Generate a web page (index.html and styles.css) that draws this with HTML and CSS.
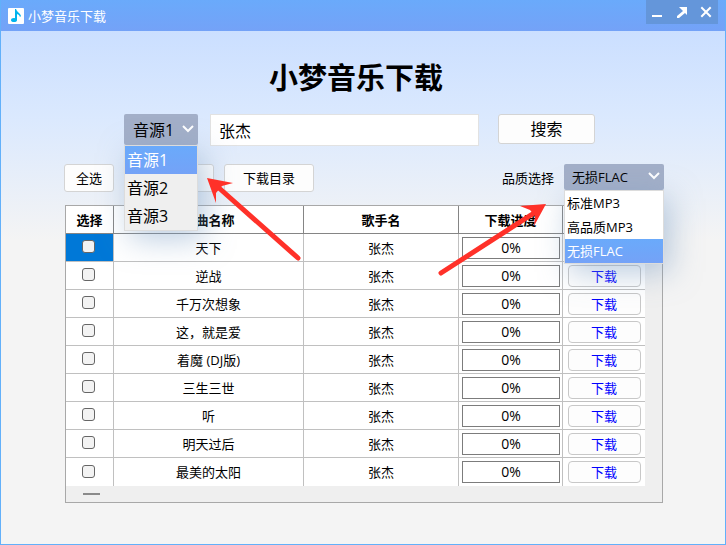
FILE: index.html
```
<!DOCTYPE html>
<html lang="zh-CN">
<head>
    <meta charset="UTF-8">
    <meta name="viewport" content="width=device-width, initial-scale=1.0">
    <title>小梦音乐下载</title>
    <link rel="stylesheet" href="styles.css">
</head>
<body>
    <div class="window">

        <!-- Title bar -->
        <header class="titlebar">
            <svg class="logo" viewBox="0 0 16 16" width="16" height="16" aria-hidden="true">
                <rect width="16" height="16" rx="1" fill="#fff"/>
                <ellipse cx="6" cy="12" rx="3" ry="2" fill="#00b4ee"/>
                <path d="M7 1h1l1 2 3 3 1 2-1 1-1-2-2-1v6H7z" fill="#00b4ee"/>
            </svg>
            <span class="titlebar-text">小梦音乐下载</span>
            <div class="window-buttons">
                <button class="window-button" aria-label="最小化">
                    <svg viewBox="0 0 12 12" width="12" height="12"><path d="M0 9h10v2H0z" fill="#fff"/></svg>
                </button>
                <button class="window-button" aria-label="最大化">
                    <svg viewBox="0 0 12 12" width="12" height="12"><path d="M3 1h8v8L9 7l-6 5H1v-2l6-5z" fill="#fff"/></svg>
                </button>
                <button class="window-button" aria-label="关闭">
                    <svg viewBox="0 0 12 12" width="12" height="12"><path d="M2 2l8 8M10 2l-8 8" stroke="#fff" stroke-width="2" stroke-linecap="square"/></svg>
                </button>
            </div>
        </header>

        <main class="content">
            <h1>小梦音乐下载</h1>

            <!-- Source and keyword -->
            <form class="search-row">
                <div class="dropdown dropdown-source">
                    <select class="select" id="source" aria-label="音源">
                        <option>音源1</option>
                        <option>音源2</option>
                        <option>音源3</option>
                    </select>
                    <svg class="chevron" viewBox="0 0 12 8" width="12" height="8"><path d="M1 1l5 5 5-5" fill="none" stroke="#fff" stroke-width="2"/></svg>
                    <ul class="menu">
                        <li class="active">音源1</li>
                        <li>音源2</li>
                        <li>音源3</li>
                    </ul>
                </div>
                <input class="keyword" type="text" value="张杰" aria-label="关键词">
                <button class="button button-search" type="button">搜索</button>
            </form>

            <!-- Toolbar -->
            <div class="toolbar">
                <button class="button button-small">全选</button>
                <button class="button" aria-label="下载"></button>
                <button class="button">下载目录</button>
                <label class="quality-label" for="quality">品质选择</label>
                <div class="dropdown dropdown-quality">
                    <select class="select" id="quality">
                        <option>标准MP3</option>
                        <option>高品质MP3</option>
                        <option selected>无损FLAC</option>
                    </select>
                    <svg class="chevron" viewBox="0 0 12 8" width="12" height="8"><path d="M1 1l5 5 5-5" fill="none" stroke="#fff" stroke-width="2"/></svg>
                    <ul class="menu">
                        <li>标准MP3</li>
                        <li>高品质MP3</li>
                        <li class="active">无损FLAC</li>
                    </ul>
                </div>
            </div>

            <!-- Song list -->
            <div class="panel">
                <table class="songs">
                    <colgroup>
                        <col class="col-check">
                        <col class="col-name">
                        <col class="col-singer">
                        <col class="col-progress">
                        <col class="col-action">
                    </colgroup>
                    <thead>
                        <tr><th>选择</th><th>歌曲名称</th><th>歌手名</th><th>下载进度</th><th></th></tr>
                    </thead>
                    <tbody>
                        <tr>
                            <td class="selected"><input type="checkbox" aria-label="天下"></td><td>天下</td><td>张杰</td>
                            <td><div class="progress">0%</div></td><td><button class="download" aria-label="下载"></button></td>
                        </tr>
                        <tr>
                            <td><input type="checkbox" aria-label="逆战"></td><td>逆战</td><td>张杰</td>
                            <td><div class="progress">0%</div></td><td><button class="download">下载</button></td>
                        </tr>
                        <tr>
                            <td><input type="checkbox" aria-label="千万次想象"></td><td>千万次想象</td><td>张杰</td>
                            <td><div class="progress">0%</div></td><td><button class="download">下载</button></td>
                        </tr>
                        <tr>
                            <td><input type="checkbox" aria-label="这，就是爱"></td><td>这，就是爱</td><td>张杰</td>
                            <td><div class="progress">0%</div></td><td><button class="download">下载</button></td>
                        </tr>
                        <tr>
                            <td><input type="checkbox" aria-label="着魔 (DJ版)"></td><td>着魔 (DJ版)</td><td>张杰</td>
                            <td><div class="progress">0%</div></td><td><button class="download">下载</button></td>
                        </tr>
                        <tr>
                            <td><input type="checkbox" aria-label="三生三世"></td><td>三生三世</td><td>张杰</td>
                            <td><div class="progress">0%</div></td><td><button class="download">下载</button></td>
                        </tr>
                        <tr>
                            <td><input type="checkbox" aria-label="听"></td><td>听</td><td>张杰</td>
                            <td><div class="progress">0%</div></td><td><button class="download">下载</button></td>
                        </tr>
                        <tr>
                            <td><input type="checkbox" aria-label="明天过后"></td><td>明天过后</td><td>张杰</td>
                            <td><div class="progress">0%</div></td><td><button class="download">下载</button></td>
                        </tr>
                        <tr>
                            <td><input type="checkbox" aria-label="最美的太阳"></td><td>最美的太阳</td><td>张杰</td>
                            <td><div class="progress">0%</div></td><td><button class="download">下载</button></td>
                        </tr>
                    </tbody>
                </table>
                <div class="scrollbar"><div class="thumb"></div></div>
            </div>
        </main>

        <!-- Pointer arrows over the two menus -->
        <svg class="arrow arrow-source" viewBox="0 0 96 86" width="96" height="86" aria-hidden="true">
            <path d="M91 80L12 10" stroke="#ff3129" stroke-width="5" stroke-linecap="round"/>
            <path d="M0 0L26 5L15 8L9 15L9 25z" fill="#ff3129"/>
        </svg>
        <svg class="arrow arrow-quality" viewBox="0 0 110 74" width="110" height="74" aria-hidden="true">
            <path d="M4 69L97 9" stroke="#ff3129" stroke-width="5" stroke-linecap="round"/>
            <path d="M109 0L83 2L93 6L98 12L97 22z" fill="#ff3129"/>
        </svg>
    </div>
</body>
</html>
```
FILE: styles.css
```
/* General */
* {
    box-sizing: border-box;
}

body {
    margin: 0;
    font-family: "Open Sans", "Noto Sans CJK SC", sans-serif;
    font-size: 13px;
    line-height: 20px;
    color: #000;
}

button, input, select {
    font: inherit;
    color: inherit;
}

.window {
    position: relative;
    min-height: 100vh;
    border: 1px solid #62b0fa;
    border-top: none;
    background: linear-gradient(#cbdfff 31px, #dbe9fe 120px, #f4f4f4 240px);
}

/* Title bar */
.titlebar {
    display: flex;
    align-items: center;
    height: 31px;
    padding: 0 7px;
    background: linear-gradient(#6aaafb, #74a2f7);
    color: #fff;
}

.titlebar-text {
    margin-left: 4px;
    line-height: 24px;
}

.window-buttons {
    display: flex;
    align-self: flex-start;
    margin-left: auto;
    background-color: #6496da;
}

.window-button {
    display: flex;
    align-items: center;
    justify-content: center;
    width: 24px;
    height: 24px;
    padding: 0;
    border: none;
    background: none;
}

.content {
    padding: 25px 61px 41px 63px;
}

h1 {
    margin: 0;
    font-size: 29px;
    line-height: 44px;
    text-align: center;
    padding-right: 16px;
}

/* Buttons */
.button {
    width: 90px;
    height: 28px;
    padding: 0;
    border: 1px solid #d4d4d4;
    border-radius: 3px;
    background-color: #fdfdfd;
}

.button-small {
    width: 50px;
}

.button-search {
    width: 97px;
    height: 30px;
    margin-left: 19px;
}

/* Search row */
.search-row {
    display: flex;
    margin-top: 14px;
    padding: 0 69px 0 60px;
    font-size: 16px;
}

.keyword {
    flex: 1;
    min-width: 0;
    height: 32px;
    margin-left: 12px;
    padding: 0 8px;
    border: 1px solid #e2e2e2;
    background-color: #fff;
}

/* Drop-downs */
.dropdown {
    position: relative;
}

.dropdown-source {
    width: 74px;
    height: 31px;
}

.dropdown-quality {
    width: 100px;
    height: 26px;
}

.select {
    width: 100%;
    height: 100%;
    padding: 0 9px;
    border: none;
    border-radius: 2px;
    background-color: #a3afc8;
    appearance: none;
}

.dropdown-quality .select {
    padding: 0 8px;
}

.chevron {
    position: absolute;
    top: 11px;
    right: 4px;
}

.dropdown-quality .chevron {
    top: 8px;
}

.menu {
    position: absolute;
    z-index: 1;
    top: 100%;
    left: 0;
    width: 100%;
    margin: 0;
    padding: 0;
    border: 1px solid #dcdcdc;
    background-color: #efefef;
    box-shadow: 6px 8px 30px rgba(120, 155, 195, 0.5);
    list-style: none;
}

.menu li {
    padding: 0 2px;
    line-height: 28px;
}

.dropdown-quality .menu {
    background-color: #fff;
}

.dropdown-quality .menu li {
    line-height: 24px;
}

.menu .active {
    background: linear-gradient(#6aaafb, #74a2f7);
    color: #fff;
}

/* Toolbar */
.toolbar {
    display: flex;
    align-items: center;
    gap: 10px;
    margin: 18px 0 13px;
}

.dropdown-quality {
    align-self: flex-start;
}

.quality-label {
    margin-left: auto;
}

/* Song list */
.panel {
    margin: 0 1px;
    padding-right: 17px;
    border: 1px solid #a8a8a8;
    background-color: #efefef;
}

.songs {
    width: 100%;
    table-layout: fixed;
    border-collapse: separate;
    border-spacing: 0;
    background-color: #fff;
    text-align: center;
}

.songs th, .songs td {
    height: 28px;
    padding: 0;
    border-right: 1px solid #c0c0c0;
    border-bottom: 1px solid #c0c0c0;
}

.songs th {
    border-color: #858585;
}

.songs td:last-child, .songs th:last-child {
    border-right: none;
}

.songs tr:last-child td {
    border-bottom: none;
}

.songs thead tr:last-child th {
    border-bottom: 1px solid #858585;
}

.songs .selected {
    background-color: #0078d7;
}

.col-check {
    width: 48px;
}

.col-singer {
    width: 155px;
}

.col-progress {
    width: 104px;
}

.col-action {
    width: 82px;
}

.songs input {
    display: block;
    width: 13px;
    height: 13px;
    margin: 0 auto 2px 16px;
    border: 1px solid #666;
    border-radius: 3px;
    background-color: #f3f3f3;
    appearance: none;
}

.progress {
    height: 22px;
    margin: 0 2px 0 3px;
    border: 1px solid #7c7c7c;
    font-size: 14px;
}

.download {
    display: block;
    width: 73px;
    height: 22px;
    margin: 0 auto;
    padding: 0;
    border: 1px solid #c8c8c8;
    border-radius: 4px;
    background-color: #fdfdfd;
    color: #00f;
}

.scrollbar {
    height: 16px;
    padding: 7px 17px;
}

.thumb {
    width: 17px;
    height: 2px;
    background-color: #8a8a8a;
}

/* Arrows */
.arrow {
    position: absolute;
    z-index: 2;
    fill: none;
    pointer-events: none;
}

.arrow-source {
    top: 178px;
    left: 206px;
}

.arrow-quality {
    top: 204px;
    left: 436px;
}
```
